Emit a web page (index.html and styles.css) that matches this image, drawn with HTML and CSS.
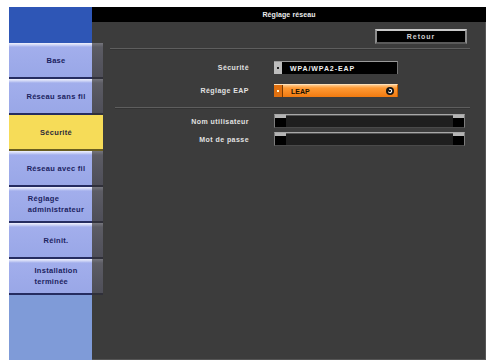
FILE: index.html
```html
<!DOCTYPE html>
<html lang="fr">
<head>
    <meta charset="UTF-8">
    <meta name="viewport" content="width=device-width, initial-scale=1.0">
    <title>Réglage réseau</title>
    <link rel="stylesheet" href="styles.css">
</head>
<body>
    <div class="screen">
        <div class="brand"></div>
        <div class="titlebar">Réglage réseau</div>

        <nav class="menu">
            <div class="item"><span class="btn"><span>Base</span></span></div>
            <div class="item"><span class="btn"><span>Réseau sans fil</span></span></div>
            <div class="item active"><span class="btn"><span>Sécurité</span></span></div>
            <div class="item"><span class="btn"><span>Réseau avec fil</span></span></div>
            <div class="item"><span class="btn"><span>Réglage<br>administrateur</span></span></div>
            <div class="item"><span class="btn"><span>Réinit.</span></span></div>
            <div class="item"><span class="btn"><span>Installation<br>terminée</span></span></div>
            <div class="menu-fill"></div>
        </nav>

        <main class="panel">
            <div class="toolbar">
                <button class="back">Retour</button>
            </div>
            <div class="sep"></div>

            <div class="form">
                <label>Sécurité</label>
                <div class="select">
                    <span class="knob"><i></i></span>
                    <span class="value">WPA/WPA2-EAP</span>
                </div>
                <label>Réglage EAP</label>
                <div class="select orange">
                    <span class="knob"><i></i></span>
                    <span class="value">LEAP</span>
                    <svg class="go" width="8" height="8" viewBox="0 0 8 8">
                        <circle cx="4" cy="4" r="4" fill="#141414"/>
                        <path d="M2.4 4.6 A1.7 1.7 0 1 0 4 2.3" stroke="#fff" stroke-width="1.1" fill="none"/>
                        <path d="M3.2 1.4 L4.6 2.3 L3.3 3.2 Z" fill="#fff"/>
                    </svg>
                </div>
            </div>

            <div class="sep second"></div>

            <div class="form text-rows">
                <label>Nom utilisateur</label>
                <div class="field"><span class="cap"></span><span class="fill"></span><span class="cap"></span></div>
                <label>Mot de passe</label>
                <div class="field"><span class="cap"></span><span class="fill"></span><span class="cap"></span></div>
            </div>
        </main>
    </div>
</body>
</html>
```

FILE: styles.css
```css
body {
    margin: 0;
    background: #fff;
    font-family: "Liberation Sans", Arial, sans-serif;
    font-weight: bold;
    font-size: 7px;
}
.screen {
    margin: 7px 0 0 9px;
    width: 477px;
    height: 353px;
    display: grid;
    grid-template-columns: 83px 11px 1fr;
    grid-template-rows: 15px 21px 1fr;
    background: #3c3c3c;
    box-shadow: inset -1px -1px 0 #555;
}
.brand {
    grid-column: 1;
    grid-row: 1 / 3;
    background: #2e56b6;
}
.titlebar {
    grid-column: 2 / 4;
    grid-row: 1;
    background: #000;
    color: #eee;
    text-align: center;
    line-height: 15px;
    letter-spacing: 0.1px;
}
.menu {
    grid-column: 1 / 3;
    grid-row: 3;
    display: flex;
    flex-direction: column;
}
.item {
    display: grid;
    grid-template-columns: 83px 11px;
    height: 36px;
}
.item::after {
    content: "";
    background: linear-gradient(#75757c 0, #5c5c64 4px, #4e4e58 100%);
    border-bottom: 2px solid #30303a;
}
.btn {
    display: flex;
    align-items: center;
    justify-content: center;
    padding-left: 11px;
    background: linear-gradient(#f0f2fd 0, #cdd3f5 2px, #a2aeec 4px, #99a7e7 100%);
    border-bottom: 2px solid #252c60;
    color: #1b2260;
    font-size: 7.5px;
    line-height: 11px;
    letter-spacing: 0.3px;
}
.btn span {
    text-align: left;
}
.item.active {
    grid-template-columns: 94px;
}
.item.active::after {
    display: none;
}
.item.active .btn {
    padding-left: 0;
    background: #f6dc58;
    border-bottom: 2px solid #6a5e20;
    color: #2c2a3a;
}
.menu-fill {
    flex: 1;
    width: 83px;
    background: #7f9bd8;
}
.panel {
    grid-column: 3;
    grid-row: 2 / 4;
    padding-top: 7px;
    color: #e2e2e2;
}
.toolbar {
    display: flex;
    justify-content: flex-end;
    padding-right: 19px;
}
.back {
    width: 92px;
    height: 15px;
    box-sizing: border-box;
    background: #000;
    border: 2px solid #8c8c8c;
    border-top-color: #cacaca;
    border-bottom-color: #5a5a5a;
    color: #d0d0d0;
    font: bold 7px "Liberation Sans", Arial, sans-serif;
    letter-spacing: 1px;
    padding: 0;
}
.sep {
    height: 1px;
    margin: 4px 16px 0 7px;
    background: #5e5e5e;
    border-bottom: 1px solid #333;
}
.sep.second {
    margin: 10px 16px 0 12px;
}
.form {
    display: grid;
    grid-template-columns: 146px 1fr;
    column-gap: 25px;
    row-gap: 10px;
    margin-top: 11px;
    align-items: center;
}
.form label {
    text-align: right;
    letter-spacing: 0.45px;
}
.text-rows {
    margin-top: 5px;
    row-gap: 4px;
}
.select {
    width: 124px;
    height: 13px;
    box-sizing: border-box;
    display: flex;
    align-items: center;
    background: #000;
    border-top: 1px solid #9a9a9a;
    border-right: 1px solid #777;
}
.knob {
    width: 8px;
    height: 100%;
    display: flex;
    align-items: center;
    justify-content: center;
    background: #bdbdbd;
    margin-right: 1px;
}
.knob i {
    width: 2px;
    height: 2px;
    background: #222;
}
.value {
    flex: 1;
    padding-left: 7px;
    color: #f0f0f0;
    letter-spacing: 0.9px;
}
.select.orange {
    background: linear-gradient(#ffc98a 0, #ff9a35 3px, #f07a10 100%);
    border-top-color: #ffe0b8;
    border-right-color: #c86000;
}
.orange .knob {
    background: #e07010;
    border-right: 1px solid #7a3a00;
}
.orange .knob i {
    background: #fff4d0;
}
.orange .value {
    color: #1a1000;
    letter-spacing: 0;
    padding-left: 7px;
}
.go {
    margin-right: 3px;
}
.field {
    width: 191px;
    height: 14px;
    box-sizing: border-box;
    display: flex;
    border: 1px solid #7c7c7c;
    border-top-color: #a8a8a8;
    border-bottom-color: #4a4a4a;
}
.cap {
    width: 11px;
    background: #000;
    border-top: 3px solid #b4b4b4;
}
.fill {
    flex: 1;
    background: #1f1f1f;
    border-top: 1px solid #555;
}
```
